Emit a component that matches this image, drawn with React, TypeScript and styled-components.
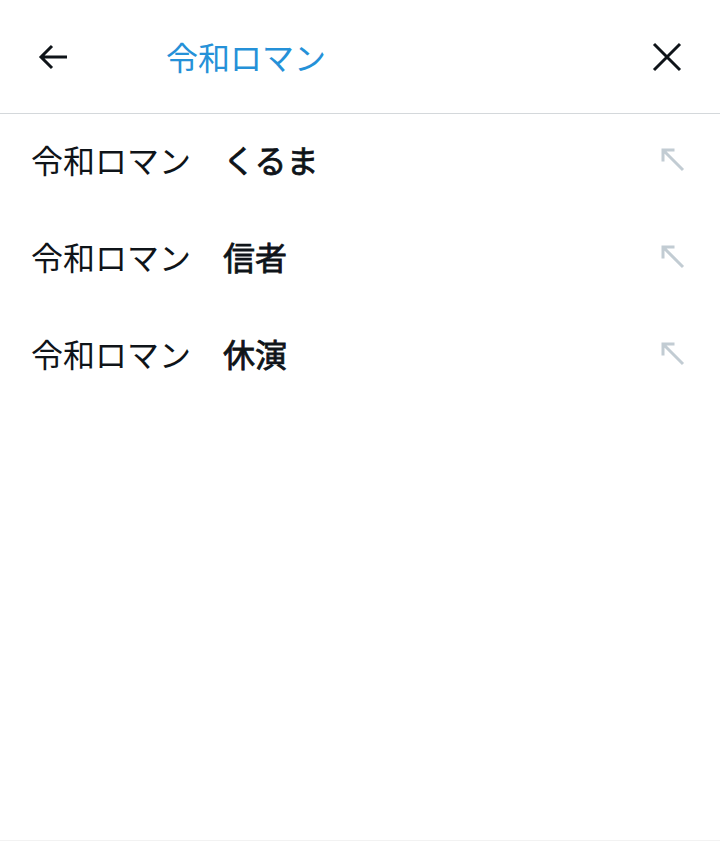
import styled, { createGlobalStyle } from "styled-components";

const GlobalStyle = createGlobalStyle`
  html, body {
    margin: 0;
    padding: 0;
    background: #ffffff;
  }
  body {
    font-family: "Noto Sans CJK JP", "Noto Sans", sans-serif;
    color: #0f1419;
  }
`;

const Page = styled.div`
  width: 720px;
  height: 841px;
  display: flex;
  flex-direction: column;
  border-bottom: 1px solid #f2f2f2;
  box-sizing: border-box;
`;

const Header = styled.div`
  height: 113px;
  display: flex;
  align-items: center;
  border-bottom: 1px solid #d4d8db;
  padding: 0 22px 0 22px;
  flex-shrink: 0;
`;

const IconButton = styled.button`
  width: 62px;
  height: 62px;
  border: none;
  background: none;
  padding: 0;
  display: flex;
  align-items: center;
  justify-content: center;
  color: #0f1419;
`;

const Title = styled.div`
  flex: 1;
  margin-left: 82px;
  margin-top: -2px;
  font-size: 32px;
  color: #2591d8;
  line-height: 1;
`;

const List = styled.ul`
  list-style: none;
  margin: 0;
  padding: 0;
`;

const Row = styled.li`
  height: 97px;
  display: flex;
  align-items: center;
  padding: 0 35px 0 31px;
`;

const Query = styled.span`
  flex: 1;
  font-size: 32px;
  line-height: 1;
  margin-top: -7px;
  white-space: pre;
`;

const Suffix = styled.span`
  font-weight: 400;
  -webkit-text-stroke: 0.8px currentColor;
`;

const Fill = styled.span`
  display: flex;
  color: #c2ccd3;
  margin-top: -5px;
`;

const suggestions = ["くるま", "信者", "休演"];

const BackIcon = () => (
  <svg width="32" height="32" viewBox="0 0 32 32" fill="none">
    <path d="M30 16H4M15 5L4 16l11 11" stroke="currentColor" strokeWidth="3" />
  </svg>
);

const CloseIcon = () => (
  <svg width="30" height="30" viewBox="0 0 30 30" fill="none">
    <path d="M2 2l26 26M28 2L2 28" stroke="currentColor" strokeWidth="3" />
  </svg>
);

const FillIcon = () => (
  <svg width="24" height="24" viewBox="0 0 24 24" fill="none">
    <path d="M2 13.5V2h11.5M2 2l20 20" stroke="currentColor" strokeWidth="3" />
  </svg>
);

const App = () => {
  return (
    <>
      <GlobalStyle />
      <Page>
        <Header>
          <IconButton aria-label="back">
            <BackIcon />
          </IconButton>
          <Title>令和ロマン</Title>
          <IconButton aria-label="close">
            <CloseIcon />
          </IconButton>
        </Header>
        <List>
          {suggestions.map((s) => (
            <Row key={s}>
              <Query>
                令和ロマン　<Suffix>{s}</Suffix>
              </Query>
              <Fill>
                <FillIcon />
              </Fill>
            </Row>
          ))}
        </List>
      </Page>
    </>
  );
};

export default App;
